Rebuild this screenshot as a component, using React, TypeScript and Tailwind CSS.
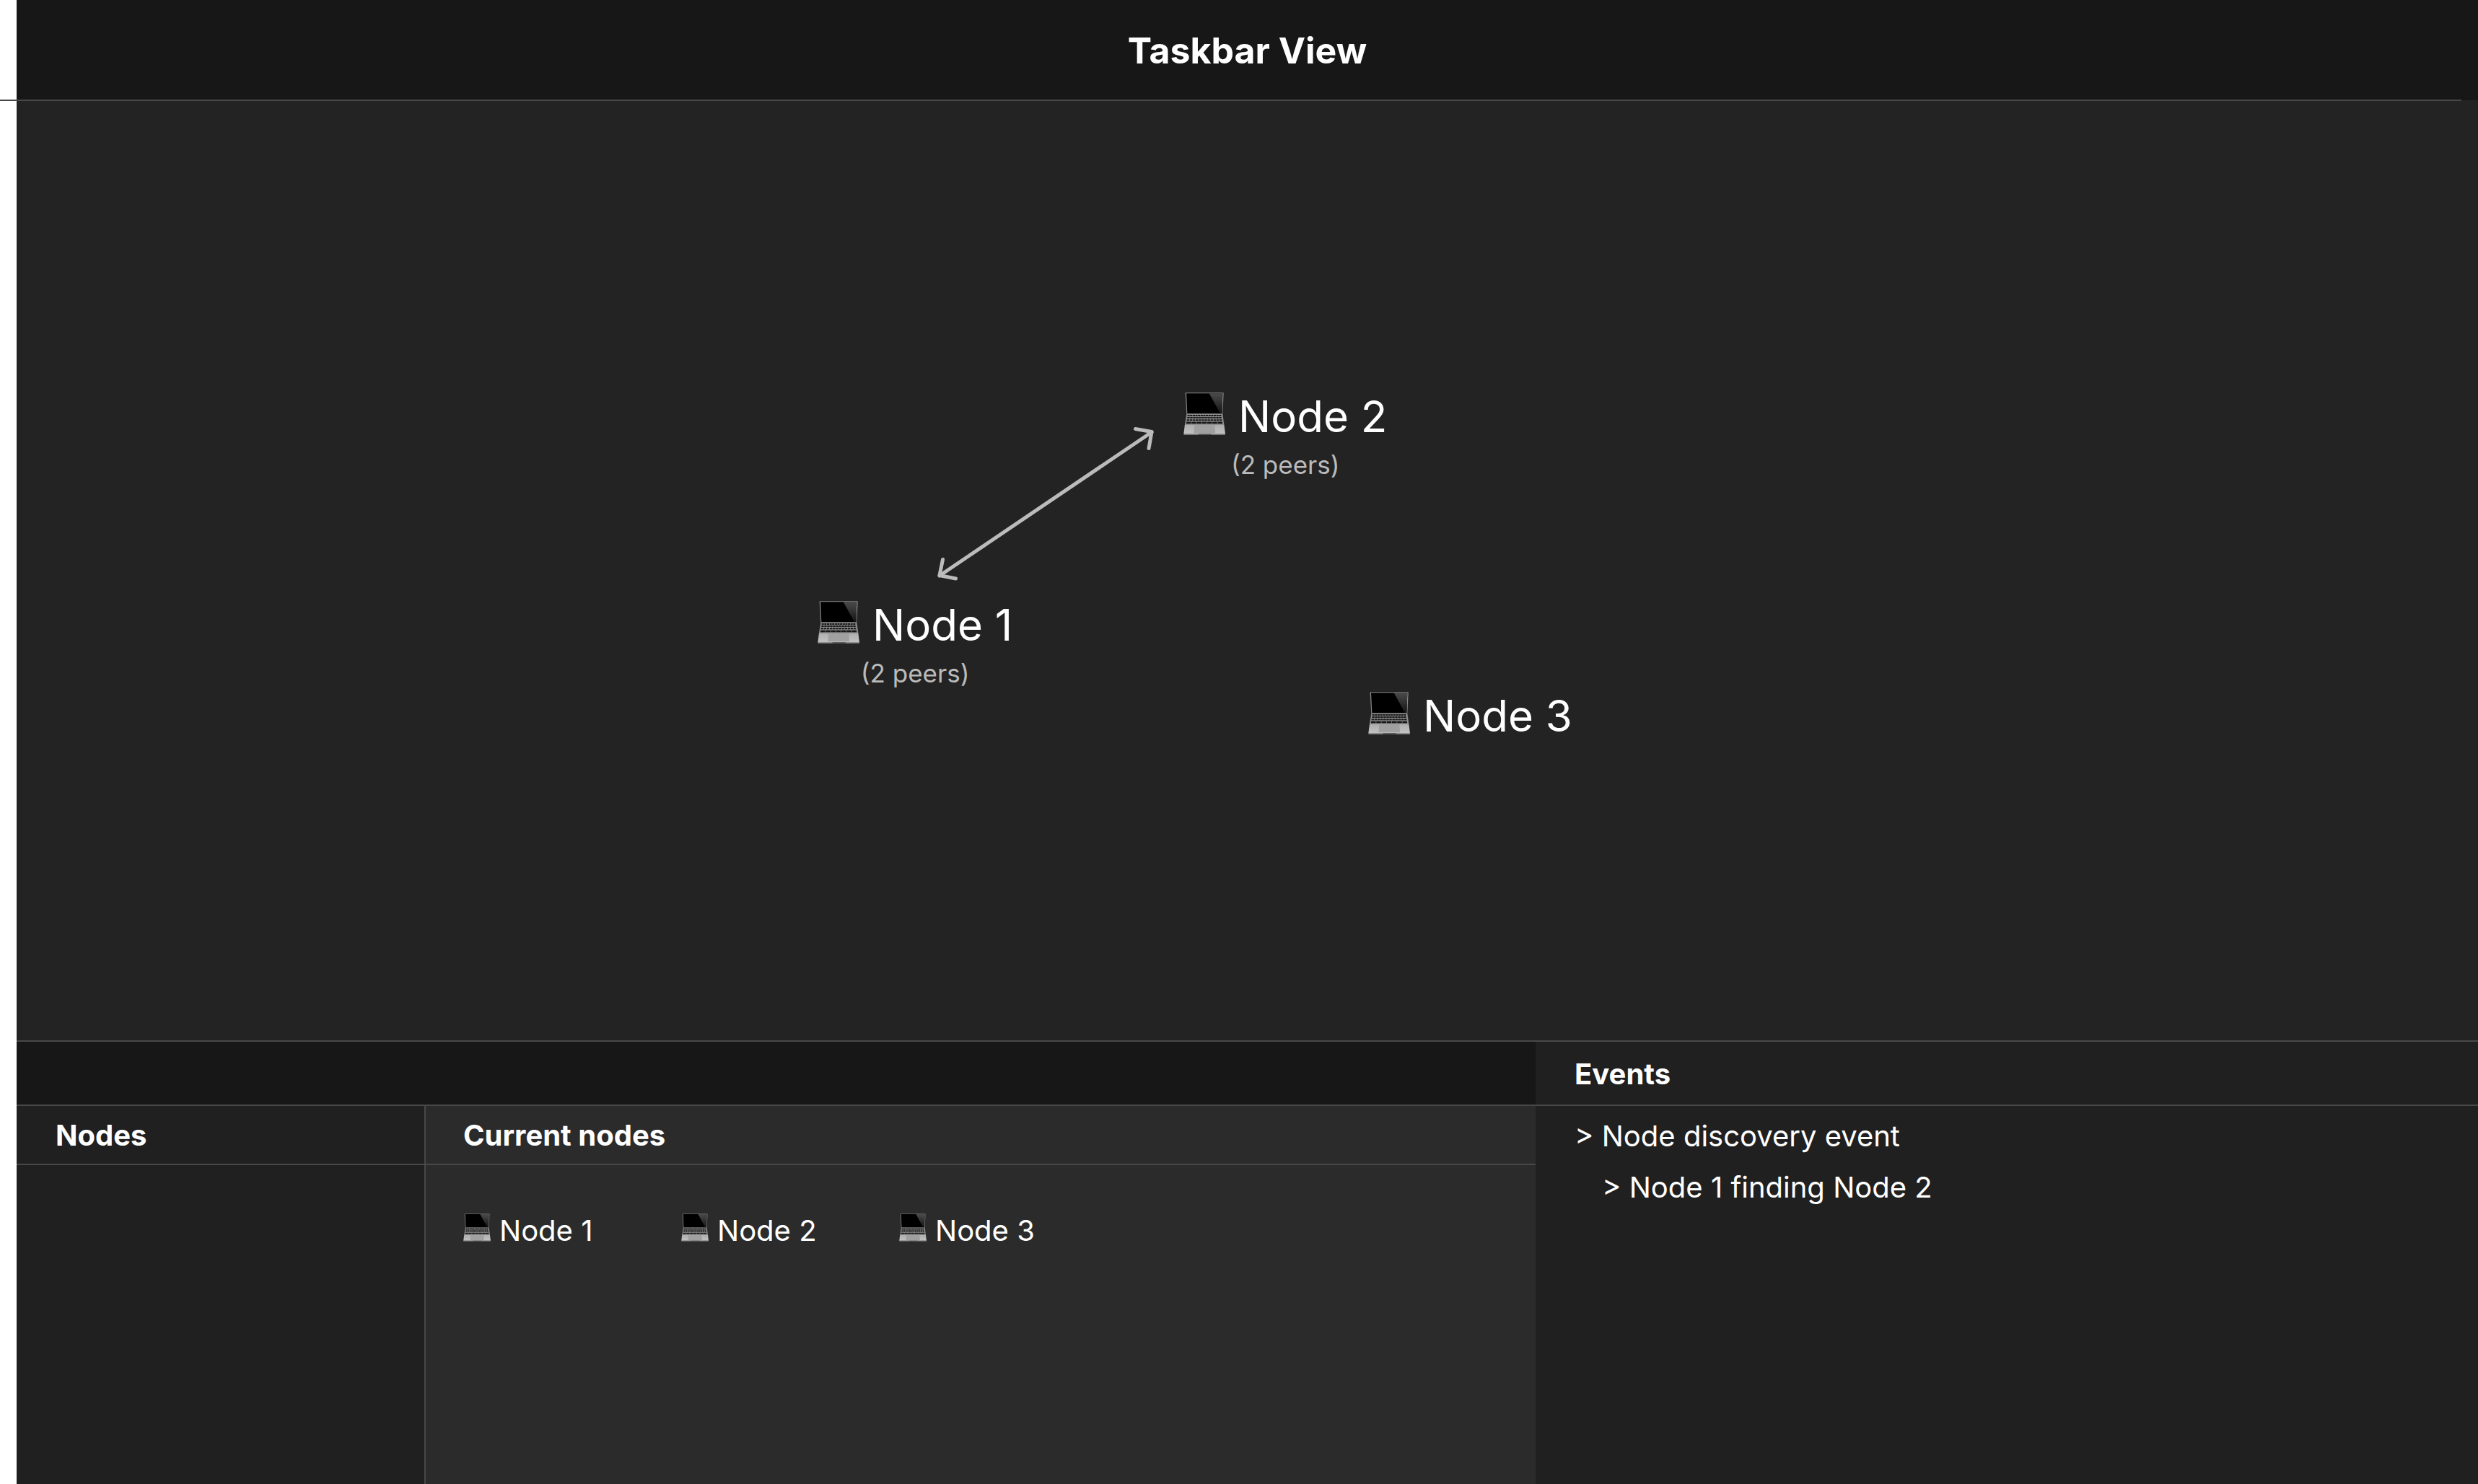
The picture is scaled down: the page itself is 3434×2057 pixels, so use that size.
import React from "react";

const KEY_ROWS = [
  { y: 134, left: 47, right: 189, height: 6, count: 13 },
  { y: 143, left: 46, right: 190, height: 6, count: 12 },
  { y: 153, left: 44, right: 192, height: 6, count: 12 },
  { y: 163, left: 42, right: 194, height: 8, count: 7 },
];

function Laptop({ className }: { className: string }) {
  return (
    <svg viewBox="30 41 174 177" className={className} aria-hidden="true">
      <defs>
        <linearGradient id="glare" x1="0" y1="0" x2="0" y2="1">
          <stop offset="0" stopColor="#4a4a4a" />
          <stop offset="1" stopColor="#141414" />
        </linearGradient>
        <linearGradient id="palm" x1="0" y1="0" x2="0" y2="1">
          <stop offset="0" stopColor="#adadad" />
          <stop offset="1" stopColor="#c2c2c2" />
        </linearGradient>
      </defs>
      <path d="M41 42H195Q197 42 197 45L193 132H43L38 45Q38 42 41 42Z" fill="#8a8a8a" />
      <path d="M42 45H193L190 129H46Z" fill="#000" />
      <path d="M137 45H193L190 129H183Z" fill="url(#glare)" />
      <path d="M43 131H193L199 174H36Z" fill="#8c8c8c" />
      {KEY_ROWS.map((row) => {
        const step = (row.right - row.left) / row.count;
        return Array.from({ length: row.count }, (_, i) => (
          <rect
            key={`${row.y}-${i}`}
            x={row.left + i * step}
            y={row.y}
            width={step - 2}
            height={row.height}
            fill="#161616"
          />
        ));
      })}
      <path d="M36 174H199L204 213H31Z" fill="url(#palm)" />
      <path d="M76 176H160L162 210H73Z" fill="#a0a0a0" />
      <path d="M31 212H204V215Q204 217 201 217H34Q31 217 31 215Z" fill="#8f8f8f" />
      <path d="M90 213H148L144 217H94Z" fill="#4d4d4d" />
    </svg>
  );
}

function GraphNode({ name, peers, className }: { name: string; peers?: string; className: string }) {
  return (
    <div className={`absolute flex flex-col items-center whitespace-nowrap ${className}`}>
      <div className="flex items-start gap-[18px]">
        <Laptop className="h-[59px] w-[58px]" />
        <span className="text-[60px] leading-[66px]">{name}</span>
      </div>
      {peers && <span className="mt-3 text-[35px] leading-[44px] text-[#bbbbbb]">{peers}</span>}
    </div>
  );
}

function PeerLink() {
  return (
    <svg
      viewBox="1290 580 320 240"
      className="absolute top-[440px] left-[1267px] h-[240px] w-[320px]"
      fill="none"
      stroke="#bbbbbb"
      strokeWidth="5"
      strokeLinecap="round"
      strokeLinejoin="round"
      aria-hidden="true"
    >
      <path d="M1302 798L1596 599" />
      <path d="M1573.500 594.500L1596 598.500L1592 621.500" />
      <path d="M1306.500 775.500L1302 797.500L1324.500 802" />
    </svg>
  );
}

const NODES = ["Node 1", "Node 2", "Node 3"];

export default function App() {
  return (
    <div className="flex min-h-screen flex-col bg-white font-[Inter,sans-serif] text-white">
      <header className="ml-[23px] flex h-[138px] items-center justify-center bg-[#171717] pt-0.5">
        <h1 className="text-[50px] leading-[60px] font-bold">Taskbar View</h1>
      </header>
      <div className="flex h-0.5">
        <div className="flex-1 bg-[#484848]" />
        <div className="w-[23px] border-t border-[#171717] bg-[#232323]" />
      </div>
      <main className="ml-[23px] flex flex-1 flex-col">
        <section className="relative flex-1 bg-[#232323]" aria-label="Network graph">
          <GraphNode name="Node 2" peers="(2 peers)" className="top-[404px] left-[1617px]" />
          <GraphNode name="Node 1" peers="(2 peers)" className="top-[693px] left-[1110px]" />
          <GraphNode name="Node 3" className="top-[819px] left-[1873px]" />
          <PeerLink />
        </section>
        <div className="flex min-h-[615px] border-t-2 border-[#484848]">
          <div className="flex flex-1 flex-col">
            <div className="h-[87px] bg-[#171717]" />
            <div className="flex flex-1 border-t-2 border-[#484848]">
              <section className="w-[567px] border-r-2 border-[#484848] bg-[#202020]">
                <h2 className="flex h-[82px] items-center border-b-2 border-[#484848] px-[54px] pt-0.5 text-[40px] leading-[48px] font-bold">
                  Nodes
                </h2>
              </section>
              <section className="flex-1 bg-[#2b2b2b]">
                <h2 className="flex h-[82px] items-center border-b-2 border-[#484848] px-[52px] pt-0.5 text-[40px] leading-[48px] font-bold">
                  Current nodes
                </h2>
                <ul className="flex px-[52px] pt-[67px]">
                  {NODES.map((name) => (
                    <li key={name} className="flex w-[302px] items-start gap-3">
                      <Laptop className="h-[39px] w-[38px]" />
                      <span className="text-[40px] leading-[48px]">{name}</span>
                    </li>
                  ))}
                </ul>
              </section>
            </div>
          </div>
          <section className="w-[1306px] bg-[#202020]">
            <h2 className="flex h-[89px] items-center border-b-2 border-[#484848] px-[54px] pt-0.5 text-[40px] leading-[48px] font-bold">
              Events
            </h2>
            <ul className="px-[54px] pt-[18px] text-[40px] leading-[48px]">
              <li>
                &gt; Node discovery event
                <ul className="pt-[23px] pl-[38px]">
                  <li>&gt; Node 1 finding Node 2</li>
                </ul>
              </li>
            </ul>
          </section>
        </div>
      </main>
    </div>
  );
}
